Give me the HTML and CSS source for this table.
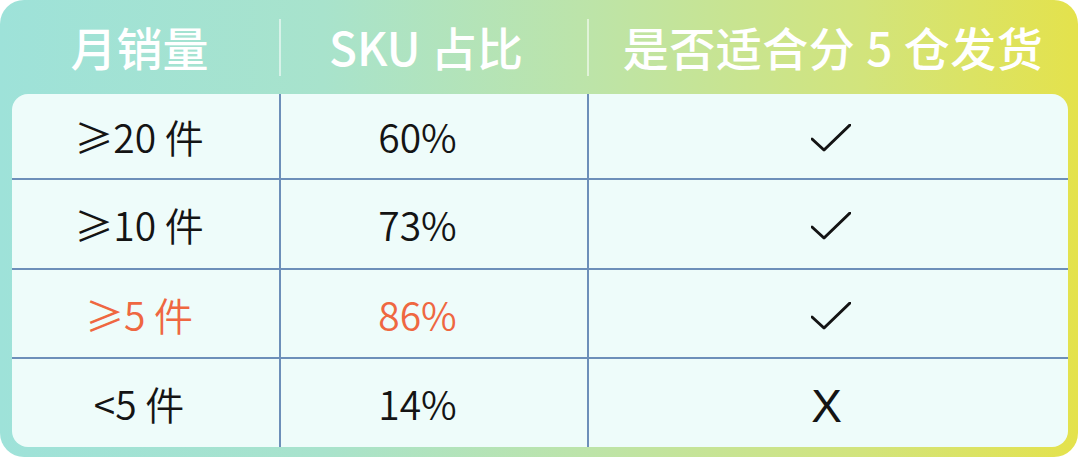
FILE: index.html
```html
<!DOCTYPE html>
<html lang="zh">
<head>
<meta charset="utf-8">
<link rel="stylesheet" href="styles.css">
</head>
<body>
<div class="card">
  <div class="head">
    <div class="hcell c1">月销量</div>
    <div class="hcell c2">SKU 占比</div>
    <div class="hcell c3">是否适合分 5 仓发货</div>
  </div>
  <div class="panel">
    <div class="cell c1 row1">≥20 件</div>
    <div class="cell c2 row1">60%</div>
    <div class="cell c3 row1"><svg class="check" viewBox="0 0 40 30"><polyline points="1,15 13,26 39,1"/></svg></div>

    <div class="cell c1 row2">≥10 件</div>
    <div class="cell c2 row2">73%</div>
    <div class="cell c3 row2"><svg class="check" viewBox="0 0 40 30"><polyline points="1,15 13,26 39,1"/></svg></div>

    <div class="cell c1 row3 hot">≥5 件</div>
    <div class="cell c2 row3 hot">86%</div>
    <div class="cell c3 row3"><svg class="check" viewBox="0 0 40 30"><polyline points="1,15 13,26 39,1"/></svg></div>

    <div class="cell c1 last">&lt;5 件</div>
    <div class="cell c2 last">14%</div>
    <div class="cell c3 last"><span class="cross">X</span></div>
  </div>
</div>
</body>
</html>
```

FILE: styles.css
```css
html, body {
  margin: 0;
  padding: 0;
  background: #ffffff;
}
body {
  width: 1080px;
  height: 459px;
  overflow: hidden;
  font-family: "Noto Sans CJK SC", "Noto Sans", sans-serif;
}
.card {
  width: 1078px;
  height: 457px;
  box-sizing: border-box;
  border-radius: 24px;
  background: linear-gradient(90deg, #9ee2d9 0%, #a8e3cc 30%, #bde4a8 55%, #d2e47c 80%, #e4e24c 100%);
  padding: 0 10px 10px 0;
  display: flex;
  flex-direction: column;
}
.head {
  height: 94px;
  display: grid;
  grid-template-columns: 281px 308px 1fr;
  align-items: center;
}
.hcell {
  color: #ffffff;
  font-weight: 500;
  font-size: 46px;
  text-align: center;
  line-height: 1;
  height: 57px;
  display: flex;
  align-items: center;
  justify-content: center;
  padding-bottom: 2px;
  box-sizing: border-box;
}
.hcell.c1, .hcell.c2 {
  border-right: 2px solid rgba(255, 255, 255, 0.55);
}
.hcell.c2 {
  padding-right: 16px;
}
.hcell.c3 {
  letter-spacing: 0.5px;
  padding-left: 9px;
}
.panel {
  flex: 1;
  margin-left: 12px;
  background: #eefcfa;
  border-radius: 16px;
  display: grid;
  grid-template-columns: 269px 308px 1fr;
  grid-template-rows: 86px 90px 89px 1fr;
  overflow: hidden;
}
.cell {
  display: flex;
  align-items: center;
  justify-content: center;
  font-size: 39px;
  font-weight: 350;
  color: #141414;
  border-bottom: 2px solid #6d8fb9;
}
.cell.c1, .cell.c2 {
  border-right: 2px solid #6d8fb9;
}
.cell.c1 { padding-right: 13px; }
.cell.c2 { padding-right: 33px; }
.cell.last { border-bottom: none; }
.cell.hot { color: #ef6741; }
.check {
  width: 40px;
  height: 30px;
  margin-left: 4px;
  margin-top: 6px;
  fill: none;
  stroke: #141414;
  stroke-width: 3;
  stroke-linecap: round;
  stroke-linejoin: round;
}
.cross {
  font-family: "Liberation Sans", Arial, sans-serif;
  font-size: 46px;
  font-weight: 400;
  line-height: 1;
  margin-top: 6px;
  margin-right: 4px;
}
```
